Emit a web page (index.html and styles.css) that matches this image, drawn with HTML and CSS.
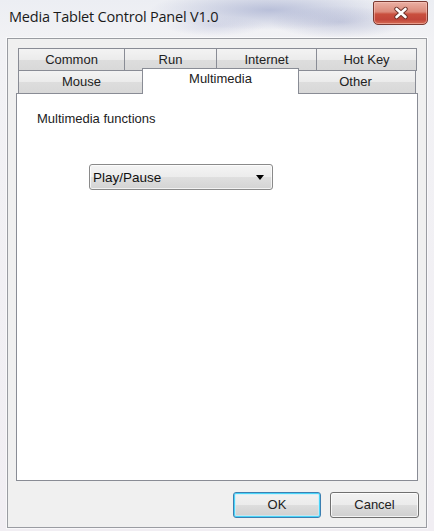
FILE: index.html
```html
<!DOCTYPE html>
<html>
<head>
<meta charset="utf-8">
<link rel="stylesheet" href="styles.css">
</head>
<body>
<div class="window">
  <div class="titlebar">
    <span class="title">Media Tablet Control Panel V1.0</span>
    <div class="close">
      <svg width="20" height="14" viewBox="0 0 20 14">
        <path d="M5.5 3 L14.5 11 M14.5 3 L5.5 11" stroke="#6a3028" stroke-width="4.4" stroke-linecap="round"/>
        <path d="M5.5 3 L14.5 11 M14.5 3 L5.5 11" stroke="#ffffff" stroke-width="2.6" stroke-linecap="round"/>
      </svg>
    </div>
  </div>
  <div class="client">
    <div class="tabs">
      <div class="tabrow row1">
        <div class="tab t-common">Common</div>
        <div class="tab t-run">Run</div>
        <div class="tab t-internet">Internet</div>
        <div class="tab t-hotkey">Hot Key</div>
      </div>
      <div class="tabrow row2">
        <div class="tab t-mouse">Mouse</div>
        <div class="tab t-multi active">Multimedia</div>
        <div class="tab t-other">Other</div>
      </div>
    </div>
    <div class="panel">
      <div class="label">Multimedia functions</div>
      <div class="select">
        <span class="select-text">Play/Pause</span>
        <svg class="arrow" width="8" height="5" viewBox="0 0 8 5"><path d="M0 0 H8 L4 5 Z" fill="#000"/></svg>
      </div>
    </div>
    <div class="buttons">
      <div class="btn btn-ok">OK</div>
      <div class="btn btn-cancel">Cancel</div>
    </div>
  </div>
</div>
</body>
</html>
```

FILE: styles.css
```css
html, body {
  margin: 0;
  padding: 0;
  background: #f1eef3;
}

.window {
  width: 434px;
  height: 531px;
  box-sizing: border-box;
  padding: 0 7px 3px 7px;
  display: flex;
  flex-direction: column;
  background:
    radial-gradient(ellipse 120px 20px at 270px 10px, rgba(150, 160, 200, 0.6), rgba(150, 160, 200, 0) 100%),
    radial-gradient(ellipse 70px 16px at 340px 22px, rgba(150, 158, 196, 0.45), rgba(150, 158, 196, 0) 100%),
    radial-gradient(ellipse 50px 10px at 215px 26px, rgba(170, 176, 210, 0.35), rgba(170, 176, 210, 0) 100%),
    linear-gradient(to bottom, #eceef3 0px, #f2f2f5 40px, #f1eef3 100%);
  font-family: "Liberation Sans", Arial, sans-serif;
  color: #000;
}

.titlebar {
  height: 38px;
  display: flex;
  justify-content: space-between;
  align-items: flex-start;
}

.title {
  font-family: "Open Sans", "Noto Sans", sans-serif;
  font-size: 14.5px;
  line-height: 20px;
  color: #1a1a1a;
  margin-top: 7px;
  margin-left: 2px;
  letter-spacing: -0.2px;
}

.close {
  width: 55px;
  height: 24px;
  box-sizing: border-box;
  margin-top: 1px;
  margin-right: -1px;
  border: 1px solid #7a3a32;
  border-radius: 2px 2px 5px 5px;
  background: linear-gradient(to bottom, #eab0a4 0%, #dc8a7a 45%, #c94f3e 55%, #c2463a 80%, #d56c55 100%);
  box-shadow: inset 0 0 0 1px rgba(255, 205, 195, 0.5);
  display: flex;
  align-items: center;
  justify-content: center;
}

.close svg {
  display: block;
}

.client {
  height: 490px;
  box-sizing: border-box;
  border: 1px solid #9a9ca2;
  background: #f0f0f0;
  padding: 9px 0 0 8px;
  box-shadow: 0 0 0 1px rgba(255, 255, 255, 0.6);
}

.tabs {
  margin-left: 2px;
  width: 399px;
}

.tabrow {
  display: flex;
  align-items: flex-start;
}

.tab {
  box-sizing: border-box;
  border: 1px solid #898c95;
  border-bottom: none;
  background: linear-gradient(to bottom, #f3f3f3 0%, #ebebeb 50%, #dddddd 51%, #d8d8d8 100%);
  font-size: 13px;
  text-align: center;
  margin-left: -1px;
  color: #222;
}

.tab:first-child {
  margin-left: 0;
}

.row1 .tab {
  height: 23px;
  line-height: 21px;
  margin-bottom: -1px;
}

.row2 .tab {
  height: 23px;
  line-height: 21px;
}

.t-common { width: 107px; }
.t-run { width: 93px; }
.t-internet { width: 101px; }
.t-hotkey { width: 101px; }
.t-mouse { width: 127px; }
.t-other { width: 121px; }

.tab.active {
  position: relative;
  z-index: 2;
  width: 157px;
  height: 26px;
  margin: -2px -3px -1px -3px;
  background: #ffffff;
  line-height: 20px;
}

.panel {
  position: relative;
  z-index: 1;
  width: 402px;
  height: 388px;
  box-sizing: border-box;
  border: 1px solid #898c95;
  background: #ffffff;
  padding: 17px 0 0 20px;
}

.label {
  font-size: 13px;
  line-height: 15px;
  color: #222;
}

.select {
  margin-top: 38px;
  margin-left: 52px;
  width: 184px;
  height: 26px;
  box-sizing: border-box;
  border: 1px solid #8a8a8a;
  border-radius: 3px;
  background: linear-gradient(to bottom, #f4f4f4 0%, #ececec 50%, #dfdfdf 51%, #d3d3d3 100%);
  box-shadow: inset 0 0 0 1px rgba(255, 255, 255, 0.7);
  display: flex;
  align-items: center;
  justify-content: space-between;
  padding: 0 8px 0 3px;
}

.select-text {
  font-size: 13.5px;
  color: #111;
}

.arrow {
  display: block;
  margin-top: 1px;
}

.buttons {
  width: 403px;
  margin-top: 11px;
  display: flex;
  justify-content: flex-end;
  gap: 9px;
}

.btn {
  height: 26px;
  box-sizing: border-box;
  border: 1px solid #707070;
  border-radius: 3px;
  background: linear-gradient(to bottom, #f2f2f2 0%, #ebebeb 50%, #dddddd 51%, #cfcfcf 100%);
  box-shadow: inset 0 0 0 1px rgba(255, 255, 255, 0.75);
  font-size: 13px;
  line-height: 24px;
  text-align: center;
  color: #222;
}

.btn-ok {
  width: 88px;
  border-color: #3c7fb1;
  box-shadow: inset 0 0 0 1px #48d4f9, inset 0 0 0 2px rgba(200, 236, 250, 0.7);
}

.btn-cancel {
  width: 89px;
}
```
